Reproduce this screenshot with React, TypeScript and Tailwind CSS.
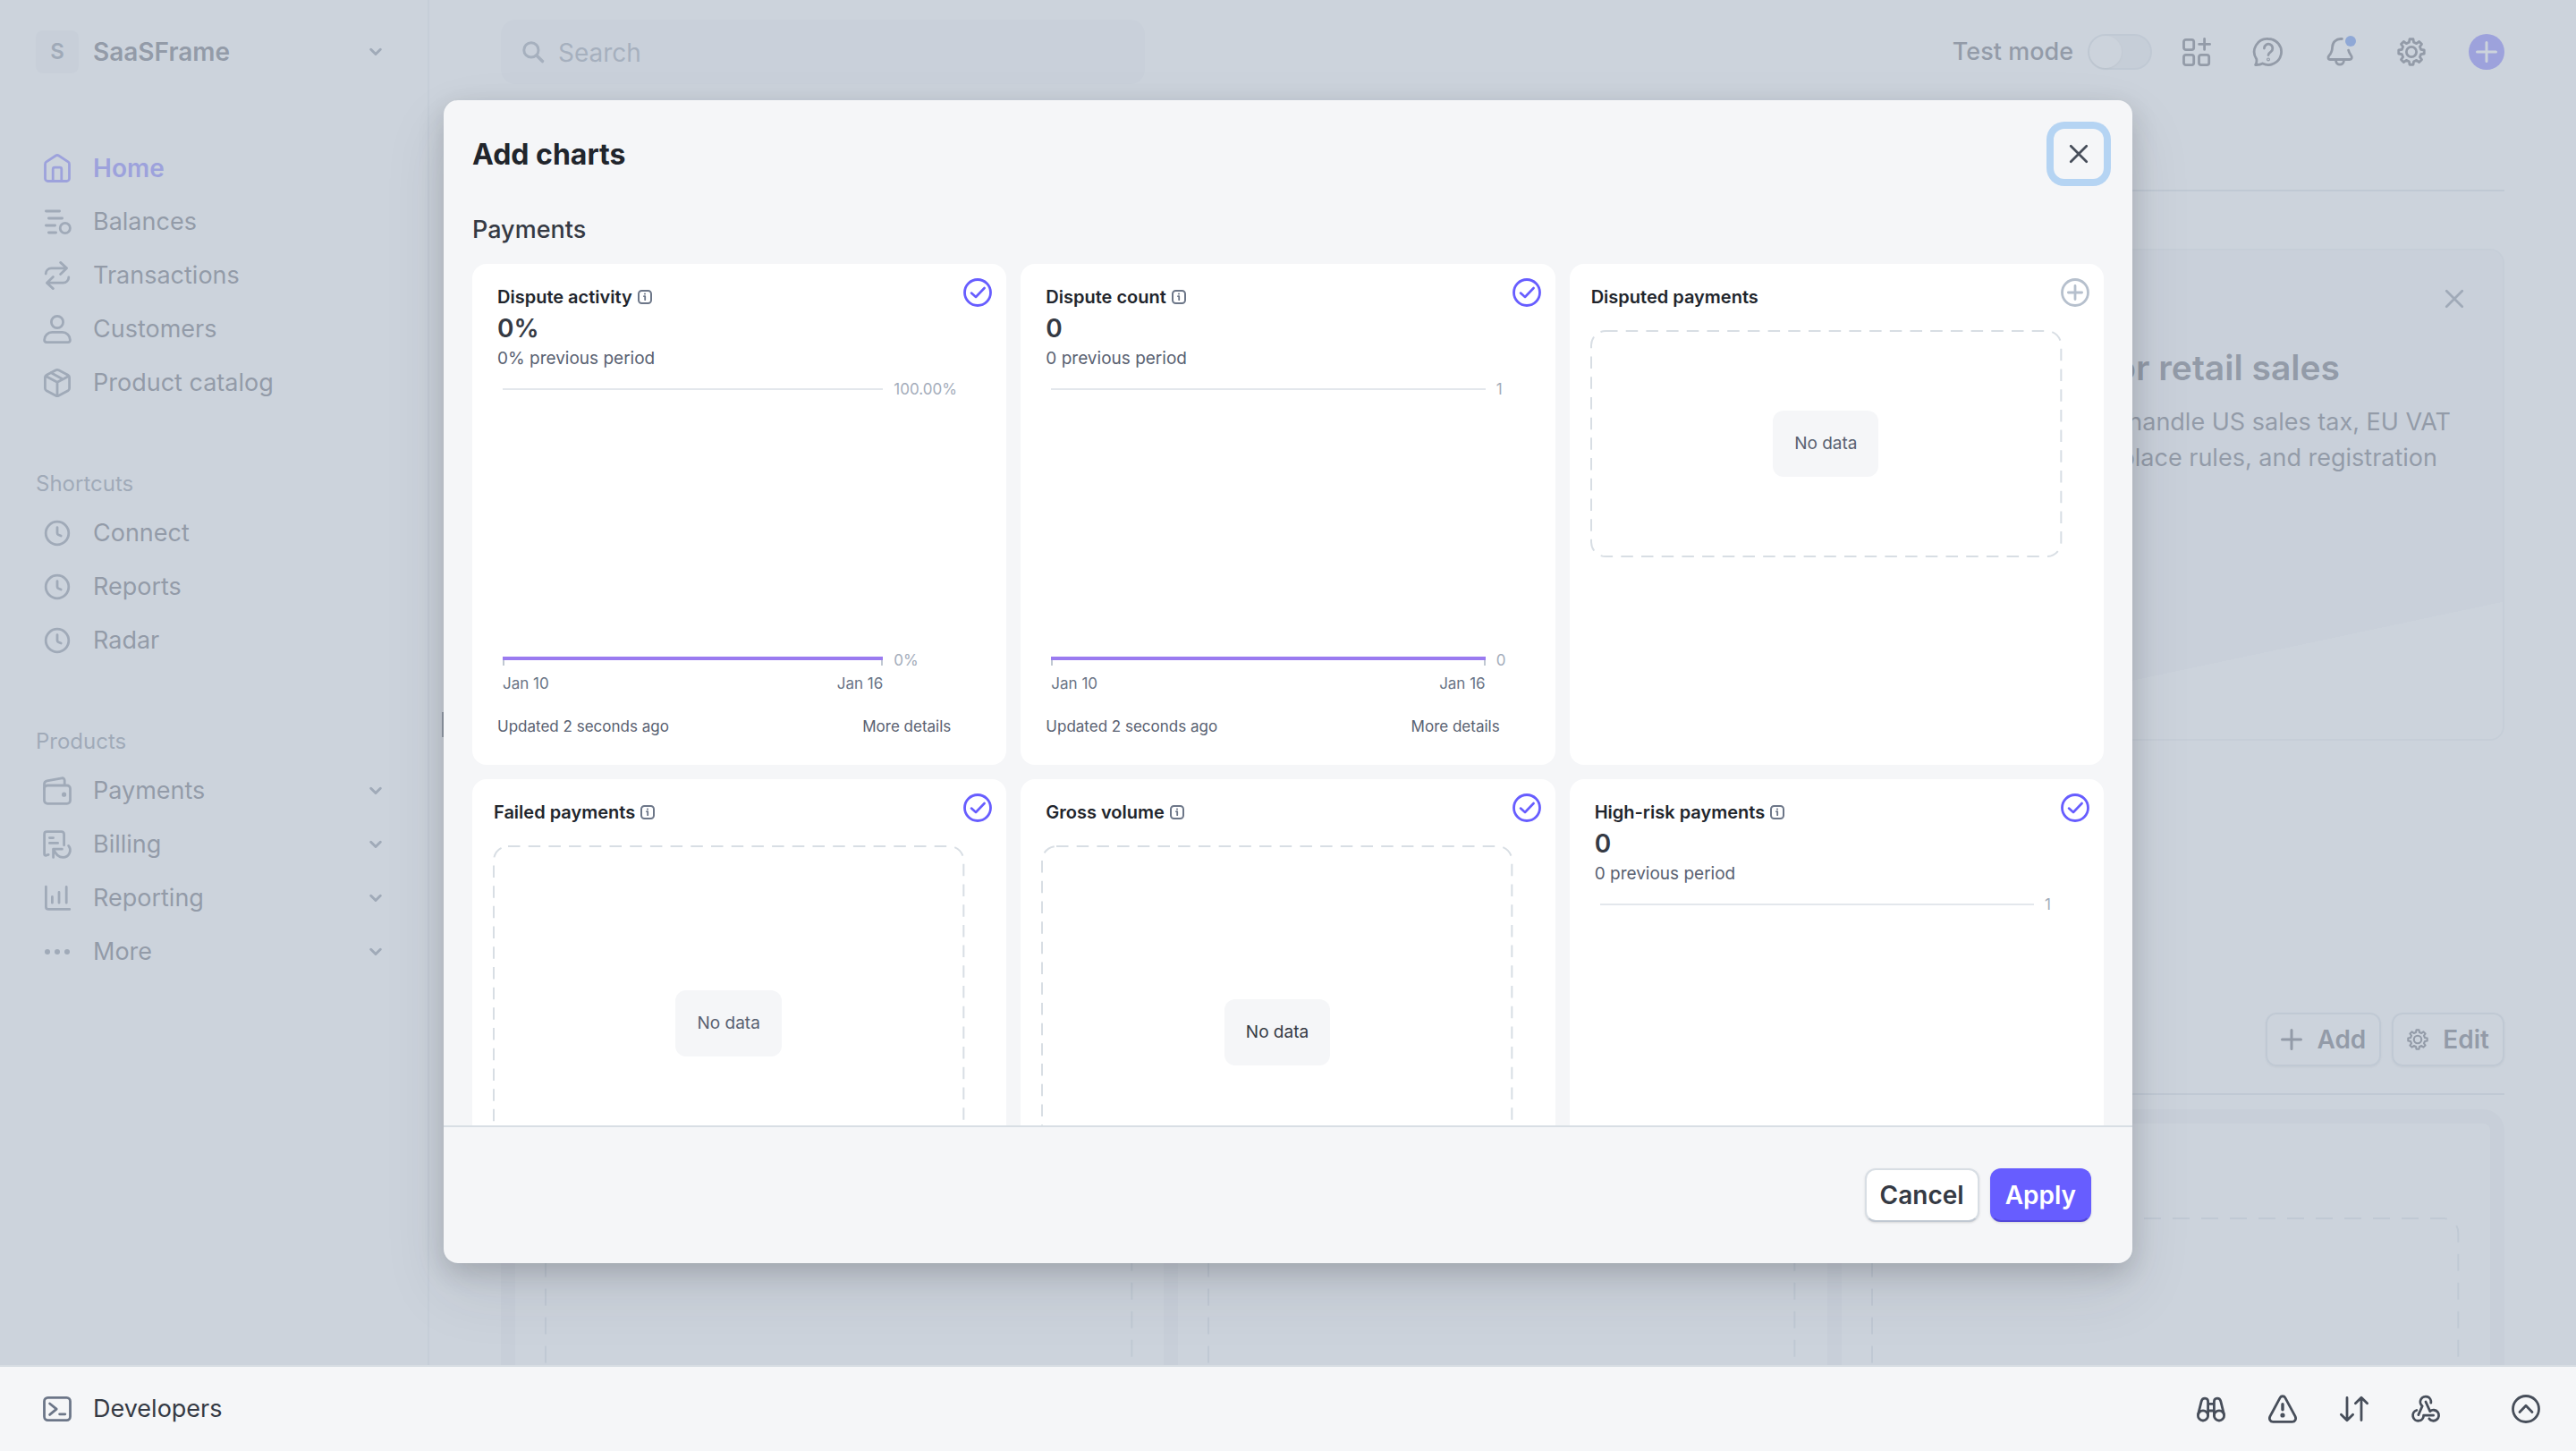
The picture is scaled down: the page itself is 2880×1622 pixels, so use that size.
import type { ReactNode } from "react";

/* ---------- icons (16-unit grid) ---------- */

function Icon({ children, className = "size-8" }: { children: ReactNode; className?: string }) {
  return (
    <svg
      viewBox="0 0 16 16"
      fill="none"
      stroke="currentColor"
      strokeWidth="1.4"
      strokeLinecap="round"
      strokeLinejoin="round"
      aria-hidden="true"
      className={`shrink-0 overflow-visible ${className}`}
    >
      {children}
    </svg>
  );
}

const HomeIcon = () => (
  <Icon>
    <path d="M1.25 5.7v8.05a1.5 1.5 0 0 0 1.5 1.5h10.5a1.5 1.5 0 0 0 1.5-1.5V5.7a1.5 1.5 0 0 0-.68-1.26L8.83 1.02a1.5 1.5 0 0 0-1.66 0L1.93 4.44a1.5 1.5 0 0 0-.68 1.26Z" />
    <path d="M5.6 15V8.6a1 1 0 0 1 1-1h2.8a1 1 0 0 1 1 1V15" />
  </Icon>
);

const BalancesIcon = () => (
  <Icon>
    <path d="M1.7 2h7.6M3.2 6h7.6M1.7 10h5.1M3.2 14h4.1" />
    <circle cx="12.4" cy="11.5" r="2.8" />
  </Icon>
);

const TransactionsIcon = () => (
  <Icon>
    <path d="M1.6 7a3.1 3.1 0 0 1 3.1-3.1h8.6M9.8.7l3.5 3.2-3.5 3.4" />
    <path d="M14.4 9a3.1 3.1 0 0 1-3.1 3.1H2.7M5.7 8.7l-3.5 3.4 3.5 3.2" />
  </Icon>
);

const CustomersIcon = () => (
  <Icon>
    <circle cx="8" cy="4" r="3.3" />
    <path d="M5.1 9.7h5.8A4.3 4.3 0 0 1 15.2 14c0 .7-.5 1.3-1.2 1.3H2A1.3 1.3 0 0 1 .8 14a4.3 4.3 0 0 1 4.3-4.3Z" />
  </Icon>
);

const BoxIcon = () => (
  <Icon>
    <path d="M1.2 5v6c0 .6.3 1.1.8 1.4l5.2 2.7c.5.3 1.1.3 1.6 0l5.2-2.7c.5-.3.8-.8.8-1.4V5c0-.6-.3-1.1-.8-1.4L8.8.9a1.7 1.7 0 0 0-1.6 0L2 3.6c-.5.3-.8.8-.8 1.4Z" />
    <path d="M1.6 4.3 8 7.6l6.4-3.3M8 7.6v7.5M4.6 2.4l5.9 3.2" />
  </Icon>
);

const ClockIcon = () => (
  <Icon>
    <circle cx="8" cy="8" r="6.4" />
    <path d="M8 4.8v3.1c0 .5.2.8.6 1l1.5.6" />
  </Icon>
);

const WalletIcon = () => (
  <Icon>
    <rect x=".75" y="5" width="14.5" height="10.2" rx="1.8" />
    <path d="M.75 7V4.2c0-.9.6-1.6 1.5-1.8L10.6.9a1.3 1.3 0 0 1 1.5 1.3v2.6" />
    <circle cx="11.8" cy="10.1" r=".6" fill="currentColor" />
  </Icon>
);

const BillingIcon = () => (
  <Icon>
    <path d="M11.8 8.4V2.2c0-.8-.6-1.4-1.4-1.4H2.2C1.4.8.8 1.4.8 2.2v11.2c0 .6.5.9 1 .7l1.3-.4" />
    <path d="M3.7 4.3h2.1M3.7 7.2h4.6M5.8 15.2v-4.6h4.9" />
    <path d="M6 10.8c1.2 2.9 3 4.4 5.2 4.4a4 4 0 0 0 3.1-6.5" />
  </Icon>
);

const ReportingIcon = () => (
  <Icon>
    <path d="M1.7 1.6v11.3c0 .8.5 1.3 1.3 1.3h11.9M5.2 7.2v3.4M9 4.7v5.9M13.1 1.7v8.9" />
  </Icon>
);

const MoreIcon = () => (
  <Icon>
    <g fill="currentColor" stroke="none">
      <circle cx="2.5" cy="8" r="1.5" />
      <circle cx="8" cy="8" r="1.5" />
      <circle cx="13.5" cy="8" r="1.5" />
    </g>
  </Icon>
);

const ChevronDown = () => (
  <Icon className="size-4">
    <path d="M2.7 5.3 8 10.5l5.3-5.2" strokeWidth="3" />
  </Icon>
);

const CloseIcon = () => (
  <Icon className="size-5">
    <path d="M1 1l14 14M15 1 1 15" strokeWidth="2.2" />
  </Icon>
);

const SearchIcon = () => (
  <Icon className="size-6">
    <circle cx="6.6" cy="6.6" r="5.4" strokeWidth="2" />
    <path d="m10.8 10.8 4.2 4.2" strokeWidth="2.4" />
  </Icon>
);

const AppsIcon = () => (
  <Icon>
    <rect x=".75" y="1.2" width="5.6" height="5.6" rx="1.2" />
    <rect x=".75" y="9.7" width="5.6" height="5.6" rx="1.2" />
    <rect x="9.25" y="9.7" width="5.6" height="5.6" rx="1.2" />
    <path d="M12.3.7v6M9.3 3.7h6" />
  </Icon>
);

const HelpIcon = () => (
  <Icon>
    <path d="M8 .75a7.25 7.25 0 1 1-3.2 13.75c-1 .6-2.3.8-4 .75.6-.9.8-2 .6-3.2A7.25 7.25 0 0 1 8 .75Z" />
    <path d="M5.7 6a2.35 2.35 0 1 1 3.7 1.9C8.5 8.5 8 8.9 8 9.8" />
    <circle cx="8" cy="12.2" r=".3" />
  </Icon>
);

const BellIcon = () => (
  <Icon>
    <path d="M9.2.75h-.7a4.6 4.6 0 0 0-4.7 4.5c-.1 2.3-.5 3.4-1.7 4.6-1 1-.7 2.4.5 2.4h10.9c1.2 0 1.6-1.3.7-2.3-.8-1-1.2-1.7-1.4-2.9" />
    <path d="M5.8 12.9a2.2 2.2 0 0 0 4.4 0" />
    <circle cx="14" cy="2" r="3" fill="#3570ec" stroke="none" />
  </Icon>
);

const gearOutline = Array.from({ length: 8 }, (_, tooth) => {
  const base = (tooth * Math.PI) / 4;
  return [
    [-0.24, 5.5],
    [-0.14, 7.2],
    [0.14, 7.2],
    [0.24, 5.5],
  ]
    .map(([turn, radius]) => {
      const angle = base + turn;
      return `${(8 + radius * Math.sin(angle)).toFixed(2)},${(8 - radius * Math.cos(angle)).toFixed(2)}`;
    })
    .join(" ");
}).join(" ");

const GearIcon = ({ className }: { className?: string }) => (
  <Icon className={className}>
    <polygon points={gearOutline} />
    <circle cx="8" cy="8" r="2.8" />
  </Icon>
);

const PlusIcon = ({ className = "size-6" }: { className?: string }) => (
  <Icon className={className}>
    <path d="M8 1v14M1 8h14" strokeWidth="2" />
  </Icon>
);

const TerminalIcon = () => (
  <Icon>
    <rect x=".75" y="1.7" width="14.5" height="12.6" rx="2" />
    <path d="M3.8 5l3.8 3.1-3.8 3.1M9.3 10.9h3.1" />
  </Icon>
);

const BinocularsIcon = () => (
  <Icon>
    <circle cx="3.5" cy="11.7" r="2.8" />
    <circle cx="12.5" cy="11.7" r="2.8" />
    <path d="M.8 10.9 2.6 3.7C3.2 1.4 6.3 1.6 6.3 3.9v7.8M15.2 10.9l-1.8-7.2c-.6-2.3-3.7-2.1-3.7.2v7.8M6.3 5.2h3.4M6.3 9h3.4" />
  </Icon>
);

const AlertIcon = () => (
  <Icon>
    <path d="M6.6 1.7a1.6 1.6 0 0 1 2.8 0L15 12.1c.8 1.6-.1 3.1-1.7 3.1H2.7C1.1 15.2.2 13.7 1 12.1Z" />
    <path d="M8 5.4v3" strokeWidth="1.7" />
    <circle cx="8" cy="11.5" r=".6" />
  </Icon>
);

const SortIcon = () => (
  <Icon>
    <path d="M4 1.7v12.6M.7 11.1 4 14.4l3.3-3.3M12 14.3V1.7M8.7 4.9 12 1.6l3.3 3.3" />
  </Icon>
);

const WebhookIcon = () => (
  <Icon>
    <path d="M10.9 4.6A3 3 0 1 0 6.1 6.4L3.9 11.3" />
    <path d="M8 4l2.4 5.3a3 3 0 1 1-.5 4.1" />
    <path d="M12.3 11.6H6.8a3 3 0 1 1-3.9-2.85" />
  </Icon>
);

const ExpandIcon = () => (
  <Icon>
    <circle cx="8" cy="8" r="7.25" />
    <path d="M4.5 9.7 8 6.1l3.5 3.6" />
  </Icon>
);

const InfoIcon = () => (
  <Icon className="size-4">
    <rect x="1" y="1" width="14" height="14" rx="3.5" strokeWidth="2" />
    <path d="M7 7.2h1.2v4" strokeWidth="1.8" />
    <circle cx="8" cy="4.5" r=".4" />
  </Icon>
);

const CheckCircle = () => (
  <Icon>
    <circle cx="8" cy="8" r="7.25" />
    <path d="M4.5 8.3 7 10.5l4.8-5" strokeWidth="1.3" />
  </Icon>
);

const PlusCircle = () => (
  <Icon>
    <circle cx="8" cy="8" r="7.25" />
    <path d="M8 4.2v7.6M4.2 8h7.6" />
  </Icon>
);

/* ---------- dashed placeholder ---------- */

function DashedFrame({
  children,
  className,
  dash = "13.5 9.2",
}: {
  children?: ReactNode;
  className: string;
  dash?: string;
}) {
  return (
    <div className={`relative flex items-center justify-center p-px ${className}`}>
      <svg aria-hidden="true" className="absolute inset-0 size-full overflow-visible">
        <rect
          width="100%"
          height="100%"
          rx="16"
          fill="none"
          stroke="#d8dee4"
          strokeWidth="2"
          strokeDasharray={dash}
        />
      </svg>
      {children}
    </div>
  );
}

/* ---------- page behind the dialog ---------- */

function NavItem({
  icon,
  label,
  active = false,
  expandable = false,
}: {
  icon: ReactNode;
  label: string;
  active?: boolean;
  expandable?: boolean;
}) {
  return (
    <li>
      <a
        href="#"
        className={
          active
            ? "flex h-15 items-center gap-6 text-[28px] font-semibold text-[#635bff]"
            : "flex h-15 items-center gap-6 text-[#414552]"
        }
      >
        <span className={active ? "" : "text-[#6c7688]"}>{icon}</span>
        <span className="flex-1">{label}</span>
        {expandable && (
          <span className="text-[#6c7688]">
            <ChevronDown />
          </span>
        )}
      </a>
    </li>
  );
}

function Sidebar() {
  return (
    <aside className="flex w-120 shrink-0 flex-col border-r-2 border-[#ebeef1] pl-10">
      <button type="button" className="mt-[34px] mr-[50px] flex h-12 items-center gap-4 text-left font-semibold">
        <span className="flex size-12 items-center justify-center rounded-lg bg-[#f0f2f5] text-2xl text-[#6c7688]">
          S
        </span>
        <span className="flex-1 text-[28px] text-[#414552]">SaaSFrame</span>
        <span className="text-[#6c7688]">
          <ChevronDown />
        </span>
      </button>
      <nav className="pt-[76px] pr-[50px] pl-2">
        <ul>
          <NavItem icon={<HomeIcon />} label="Home" active />
          <NavItem icon={<BalancesIcon />} label="Balances" />
          <NavItem icon={<TransactionsIcon />} label="Transactions" />
          <NavItem icon={<CustomersIcon />} label="Customers" />
          <NavItem icon={<BoxIcon />} label="Product catalog" />
        </ul>
        <h2 className="mt-16 -ml-2 h-11 text-2xl leading-[38px] text-[#6c7688]">Shortcuts</h2>
        <ul>
          <NavItem icon={<ClockIcon />} label="Connect" />
          <NavItem icon={<ClockIcon />} label="Reports" />
          <NavItem icon={<ClockIcon />} label="Radar" />
        </ul>
        <h2 className="mt-16 -ml-2 h-11 text-2xl leading-[38px] text-[#6c7688]">Products</h2>
        <ul>
          <NavItem icon={<WalletIcon />} label="Payments" expandable />
          <NavItem icon={<BillingIcon />} label="Billing" expandable />
          <NavItem icon={<ReportingIcon />} label="Reporting" expandable />
          <NavItem icon={<MoreIcon />} label="More" expandable />
        </ul>
      </nav>
    </aside>
  );
}

function TopBar() {
  return (
    <header className="flex items-center justify-between pt-[22px] text-[#414552]">
      <label className="flex h-18 w-[720px] items-center gap-4 rounded-2xl bg-[#f5f6f8] px-6 text-[#818a9b]">
        <SearchIcon />
        <input
          type="search"
          placeholder="Search"
          aria-label="Search"
          className="min-w-0 flex-1 bg-transparent pt-0.5 text-[28px] outline-none placeholder:text-[#818a9b]"
        />
      </label>
      <div className="flex items-center">
        <label className="mr-[34px] flex items-center gap-4 font-medium">
          Test mode
          <input
            type="checkbox"
            role="switch"
            className="h-10 w-18 appearance-none rounded-full border-2 border-[#d8dee4] bg-[#ebeef1] before:block before:size-9 before:rounded-full before:bg-white before:shadow-sm"
          />
        </label>
        <div className="flex items-center gap-12">
          <button type="button" aria-label="Apps">
            <AppsIcon />
          </button>
          <button type="button" aria-label="Help">
            <HelpIcon />
          </button>
          <button type="button" aria-label="Notifications">
            <BellIcon />
          </button>
          <button type="button" aria-label="Settings">
            <GearIcon />
          </button>
          <button
            type="button"
            aria-label="Create"
            className="flex size-10 items-center justify-center rounded-full bg-[#635bff] text-white"
          >
            <PlusIcon />
          </button>
        </div>
      </div>
    </header>
  );
}

function PromoCard() {
  return (
    <section className="relative mt-16 h-[550px] overflow-hidden rounded-2xl border-2 border-[#ebeef1] bg-linear-[168deg,#f5f6f8_85%,#ffffff_85%]">
      <button type="button" aria-label="Dismiss" className="absolute top-[44px] right-[44px] text-[#6c7688]">
        <CloseIcon />
      </button>
      <div className="flex flex-col items-end pt-[106px] whitespace-nowrap text-[#414552]">
        <h2 className="pr-[182px] text-[39px] leading-[50px] font-semibold">Automate tax collection for retail sales</h2>
        <p className="mt-4 pr-[58px] leading-10">Let us handle US sales tax, EU VAT</p>
        <p className="pr-[73px] leading-10">including marketplace rules, and registration</p>
      </div>
    </section>
  );
}

function Overview() {
  return (
    <section className="pt-[304px]">
      <div className="flex justify-end gap-3 border-b-2 border-[#d8dee4] pb-[30px] text-[28px] font-semibold text-[#414552]">
        <button
          type="button"
          className="flex h-15 items-center gap-4 rounded-xl border-2 border-[#d8dee4] px-[15px] shadow-sm"
        >
          <PlusIcon />
          Add
        </button>
        <button
          type="button"
          className="flex h-15 items-center gap-4 rounded-xl border-2 border-[#d8dee4] px-[15px] shadow-sm"
        >
          <GearIcon className="size-6" />
          Edit
        </button>
      </div>
      <div className="mt-4 grid grid-cols-3 gap-4 rounded-3xl bg-[#f0f2f5] p-4">
        {["one", "two", "three"].map((slot) => (
          <div key={slot} className="h-[560px] rounded-lg bg-white pt-[106px] pr-[36px] pl-[34px]">
            <DashedFrame className="h-[420px]" dash="19 13" />
          </div>
        ))}
      </div>
    </section>
  );
}

/* ---------- dialog ---------- */

function ChartCard({ title, selected = true, children }: { title: string; selected?: boolean; children: ReactNode }) {
  return (
    <article className="relative h-[560px] rounded-2xl bg-white">
      <button
        type="button"
        aria-pressed={selected}
        aria-label={selected ? `Remove ${title}` : `Add ${title}`}
        className={selected ? "absolute top-4 right-4 text-[#675dff]" : "absolute top-4 right-4 text-[#b6c0cd]"}
      >
        {selected ? <CheckCircle /> : <PlusCircle />}
      </button>
      {children}
    </article>
  );
}

function CardTitle({ title, info = true }: { title: string; info?: boolean }) {
  return (
    <h3 className="flex h-7 items-center gap-1.5 text-[20px] font-semibold text-[#21252c]">
      {title}
      {info && (
        <span className="text-[#6c7688]">
          <InfoIcon />
        </span>
      )}
    </h3>
  );
}

function TrendCard({
  title,
  value,
  max,
  period,
  updated,
}: {
  title: string;
  value: string;
  max: string;
  period?: [string, string];
  updated?: string;
}) {
  const wide = max.length > 1;
  return (
    <ChartCard title={title}>
      <div className="px-7 pt-[23px]">
        <CardTitle title={title} />
        <p className="h-10 text-[28px] leading-[42px] font-semibold text-[#353a44]">{value}</p>
        <p className="text-[19px] leading-[30px] text-[#596171]">{value} previous period</p>
        <div
          className={
            wide
              ? "mt-1 ml-1.5 grid grid-cols-[1fr_98px] gap-x-3 text-[17px] leading-6 text-[#a3acba]"
              : "mt-1 ml-1.5 grid grid-cols-[1fr_38px] gap-x-3 text-[17px] leading-6 text-[#a3acba]"
          }
        >
          <div className="mt-[14px] h-[304px] border-t-2 border-[#e3e7ec] border-b-4 border-b-[#9a7bf0]" />
          <div className="flex flex-col justify-between pt-[3px]">
            <span>{max}</span>
            {period && <span className="-mb-3">{value}</span>}
          </div>
          {period && (
            <>
              <div className="h-1.5 border-x-2 border-[#c0c8d2]" />
              <div className="row-span-2" />
              <div className="flex justify-between pt-2 text-[#687385]">
                <span>{period[0]}</span>
                <span>{period[1]}</span>
              </div>
            </>
          )}
        </div>
        {updated && (
          <div className="mt-6 mr-[34px] flex justify-between text-[17px] leading-6 text-[#596171]">
            <span>{updated}</span>
            <a href="#">More details</a>
          </div>
        )}
      </div>
    </ChartCard>
  );
}

function NoData({ dark = false }: { dark?: boolean }) {
  return (
    <span
      className={
        dark
          ? "rounded-xl bg-[#f5f6f8] px-6 py-[23px] text-[19px] leading-7 text-[#353a44]"
          : "rounded-xl bg-[#f5f6f8] px-6 py-[23px] text-[19px] leading-7 text-[#596171]"
      }
    >
      No data
    </span>
  );
}

function AddChartsDialog() {
  return (
    <div
      role="dialog"
      aria-modal="true"
      aria-labelledby="dialog-title"
      className="flex h-full w-full max-w-[1888px] flex-col overflow-hidden rounded-2xl bg-[#f5f6f8] shadow-[0_30px_70px_rgba(48,49,61,0.10),0_10px_30px_rgba(0,0,0,0.16)]"
    >
      <header className="flex items-center justify-between pt-6 pr-6 pl-8">
        <h1 id="dialog-title" className="pt-0.5 text-[32px] font-bold text-[#21252c]">
          Add charts
        </h1>
        <button
          type="button"
          aria-label="Close"
          className="m-2 flex size-14 items-center justify-center rounded-xl text-[#474e5a] shadow-[0_0_0_8px_#b5d4f3]"
        >
          <CloseIcon />
        </button>
      </header>
      <div className="min-h-0 flex-1 overflow-y-auto px-8 [scrollbar-width:none]">
        <h2 className="pt-7 pb-[17px] leading-[42px] font-medium text-[#353a44]">Payments</h2>
        <div className="grid grid-cols-3 gap-4">
          <TrendCard
            title="Dispute activity"
            value="0%"
            max="100.00%"
            period={["Jan 10", "Jan 16"]}
            updated="Updated 2 seconds ago"
          />
          <TrendCard
            title="Dispute count"
            value="0"
            max="1"
            period={["Jan 10", "Jan 16"]}
            updated="Updated 2 seconds ago"
          />
          <ChartCard title="Disputed payments" selected={false}>
            <div className="pt-[23px] pr-12 pl-6">
              <CardTitle title="Disputed payments" info={false} />
              <DashedFrame className="mt-6 h-[252px]">
                <NoData />
              </DashedFrame>
            </div>
          </ChartCard>
          <ChartCard title="Failed payments">
            <div className="pt-[23px] pr-12 pl-6">
              <CardTitle title="Failed payments" />
              <DashedFrame className="mt-6 h-[396px]">
                <NoData />
              </DashedFrame>
            </div>
          </ChartCard>
          <ChartCard title="Gross volume">
            <div className="pt-[23px] pr-12 pl-6">
              <div className="pl-1">
                <CardTitle title="Gross volume" />
              </div>
              <DashedFrame className="mt-6 h-[416px]">
                <NoData dark />
              </DashedFrame>
            </div>
          </ChartCard>
          <TrendCard title="High-risk payments" value="0" max="1" />
        </div>
      </div>
      <footer className="flex h-[154px] shrink-0 items-center justify-end gap-3 border-t-2 border-[#d8dee4] pr-[46px] text-[28px] font-semibold">
        <button
          type="button"
          className="h-15 rounded-xl border-2 border-[#d8dee4] border-b-[#c0c8d2] bg-white px-[15px] text-[#353a44] shadow-sm"
        >
          Cancel
        </button>
        <button
          type="button"
          className="h-15 rounded-xl border-2 border-[#675dff] border-b-[#5348d8] bg-[#675dff] px-[15px] text-white shadow-sm"
        >
          Apply
        </button>
      </footer>
    </div>
  );
}

function DeveloperBar() {
  return (
    <footer className="flex h-24 shrink-0 items-center justify-between border-t-2 border-[#d8dee4] bg-[#f5f6f8] pr-10 pl-12 text-[#474e5a]">
      <button type="button" className="flex items-center gap-6 text-[#353a44]">
        <span className="text-[#6c7688]">
          <TerminalIcon />
        </span>
        Developers
      </button>
      <div className="flex items-center gap-12">
        <button type="button" aria-label="Inspector">
          <BinocularsIcon />
        </button>
        <button type="button" aria-label="Errors">
          <AlertIcon />
        </button>
        <button type="button" aria-label="API requests">
          <SortIcon />
        </button>
        <button type="button" aria-label="Webhooks">
          <WebhookIcon />
        </button>
        <button type="button" aria-label="Expand" className="ml-8">
          <ExpandIcon />
        </button>
      </div>
    </footer>
  );
}

export default function App() {
  return (
    <div className="flex h-screen flex-col bg-white font-['Inter',sans-serif] text-[27px]">
      <div className="relative flex min-h-0 flex-1 overflow-hidden">
        <Sidebar />
        <div className="relative min-w-0 flex-1">
          <div className="absolute top-[796px] left-3.5 h-7 w-1 bg-[#414552]" />
          <main className="px-20">
            <TopBar />
            <div className="mt-[118px] border-b-2 border-[#d8dee4]" />
            <PromoCard />
            <Overview />
          </main>
        </div>
        <div className="absolute inset-0 flex justify-center bg-[#b6c0cd]/70 pt-28 pb-[114px]">
          <AddChartsDialog />
        </div>
      </div>
      <DeveloperBar />
    </div>
  );
}
